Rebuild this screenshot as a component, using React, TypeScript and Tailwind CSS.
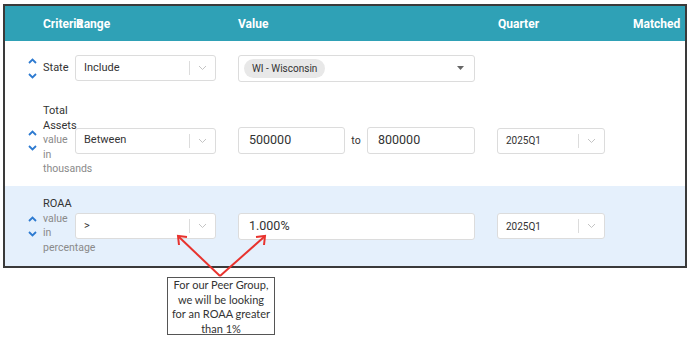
import React from 'react';

const font = { fontFamily: 'Roboto, "Liberation Sans", sans-serif' };

const Chevrons: React.FC = () => (
  <div className="flex w-[9px] flex-col items-center gap-[9px]">
    <svg width="9" height="6" viewBox="0 0 9 6">
      <path d="M1 5 L4.5 1.5 L8 5" fill="none" stroke="#2d7ad0" strokeWidth="1.8" />
    </svg>
    <svg width="9" height="6" viewBox="0 0 9 6">
      <path d="M1 1 L4.5 4.5 L8 1" fill="none" stroke="#2d7ad0" strokeWidth="1.8" />
    </svg>
  </div>
);

const SmallChevron: React.FC = () => (
  <svg width="9" height="6" viewBox="0 0 9 6">
    <path d="M1 1 L4.5 4.5 L8 1" fill="none" stroke="#c4c4c4" strokeWidth="1" />
  </svg>
);

const Select: React.FC<{ label: string; width: string; small?: boolean }> = ({ label, width, small }) => (
  <div className={`flex h-[26px] ${width} items-center rounded-[3px] border border-[#dcdcdc] bg-white`}>
    <span className={`flex-1 pl-[8px] ${small ? 'text-[10px]' : 'text-[11px]'} text-[#333]`}>{label}</span>
    <div className="h-[14px] w-px bg-[#dcdcdc]" />
    <div className="flex w-[25px] justify-center">
      <SmallChevron />
    </div>
  </div>
);

const Input: React.FC<{ value: string; width: string }> = ({ value, width }) => (
  <div className={`flex h-[27px] ${width} items-center rounded-[3px] border border-[#dcdcdc] bg-white pl-[10px] text-[12.5px] text-[#333]`}>
    {value}
  </div>
);

const Label: React.FC<{ title: string[]; note: string[] }> = ({ title, note }) => (
  <div className="ml-[6px] flex w-[32px] flex-col text-[11px] leading-[14.5px]">
    {title.map((t) => (
      <span key={t} className="whitespace-nowrap text-[#333]">{t}</span>
    ))}
    {note.map((t) => (
      <span key={t} className="whitespace-nowrap text-[10.5px] text-[#8a8a8a]">{t}</span>
    ))}
  </div>
);

const App: React.FC = () => {
  return (
    <div className="relative h-[337px] w-[688px] bg-white pl-[3px] pt-[4px]" style={font}>
      <div className="w-[684px] border-2 border-[#3a3a3a]">
        {/* Header */}
        <div className="flex h-[35px] items-center bg-[#2fa1b6] text-[12px] font-bold text-white">
          <span className="ml-[38px] w-[33px] whitespace-nowrap">Criteria</span>
          <span className="w-[162px]">Range</span>
          <span className="w-[260px]">Value</span>
          <span className="w-[135px]">Quarter</span>
          <span>Matched</span>
        </div>

        {/* State */}
        <div className="flex h-[54px] items-center bg-white pl-[23px]">
          <Chevrons />
          <Label title={['State']} note={[]} />
          <Select label="Include" width="w-[141px]" />
          <div className="ml-[22px] flex h-[27px] w-[237px] items-center rounded-[3px] border border-[#dcdcdc] bg-white pl-[5px] pr-[10px]">
            <span className="flex h-[19px] items-center rounded-full bg-[#e8e8e8] px-[8px] text-[10px] text-[#333]">
              WI - Wisconsin
            </span>
            <div className="flex-1" />
            <svg width="7" height="4" viewBox="0 0 7 4">
              <path d="M0 0 L7 0 L3.5 4 Z" fill="#666" />
            </svg>
          </div>
        </div>

        {/* Total Assets */}
        <div className="flex h-[91px] items-center bg-white pl-[23px]">
          <Chevrons />
          <Label title={['Total', 'Assets']} note={['value', 'in', 'thousands']} />
          <Select label="Between" width="w-[141px]" />
          <div className="ml-[22px]">
            <Input value="500000" width="w-[107px]" />
          </div>
          <span className="w-[22px] text-center text-[10.5px] text-[#333]">to</span>
          <Input value="800000" width="w-[108px]" />
          <div className="ml-[22px]">
            <Select label="2025Q1" width="w-[108px]" small />
          </div>
        </div>

        {/* ROAA */}
        <div className="flex h-[80px] items-center bg-[#e5f0fc] pl-[23px]">
          <Chevrons />
          <Label title={['ROAA']} note={['value', 'in', 'percentage']} />
          <Select label=">" width="w-[141px]" />
          <div className="ml-[22px]">
            <Input value="1.000%" width="w-[237px]" />
          </div>
          <div className="ml-[22px]">
            <Select label="2025Q1" width="w-[108px]" small />
          </div>
        </div>
      </div>

      {/* Callout */}
      <div
        className="ml-[164px] mt-[9px] flex h-[58px] w-[108px] flex-col items-center justify-center border-[1.5px] border-[#555] bg-white pt-[2px] text-center text-[11px] leading-[14.5px] text-[#333]"
        style={{ fontFamily: 'Lato, "Open Sans", sans-serif' }}
      >
        <div>For our Peer Group,</div>
        <div>we will be looking</div>
        <div>for an ROAA greater</div>
        <div>than 1%</div>
      </div>

      <svg className="pointer-events-none absolute left-0 top-0" width="688" height="337">
        <g stroke="#e8332e" strokeWidth="2" fill="none">
          <path d="M220 276 L179 237" />
          <path d="M220 276 L264 237" />
          <path d="M179 245 L178 236 L187 237" />
          <path d="M256 237 L265 236 L264 245" />
        </g>
      </svg>
    </div>
  );
};

export default App;
